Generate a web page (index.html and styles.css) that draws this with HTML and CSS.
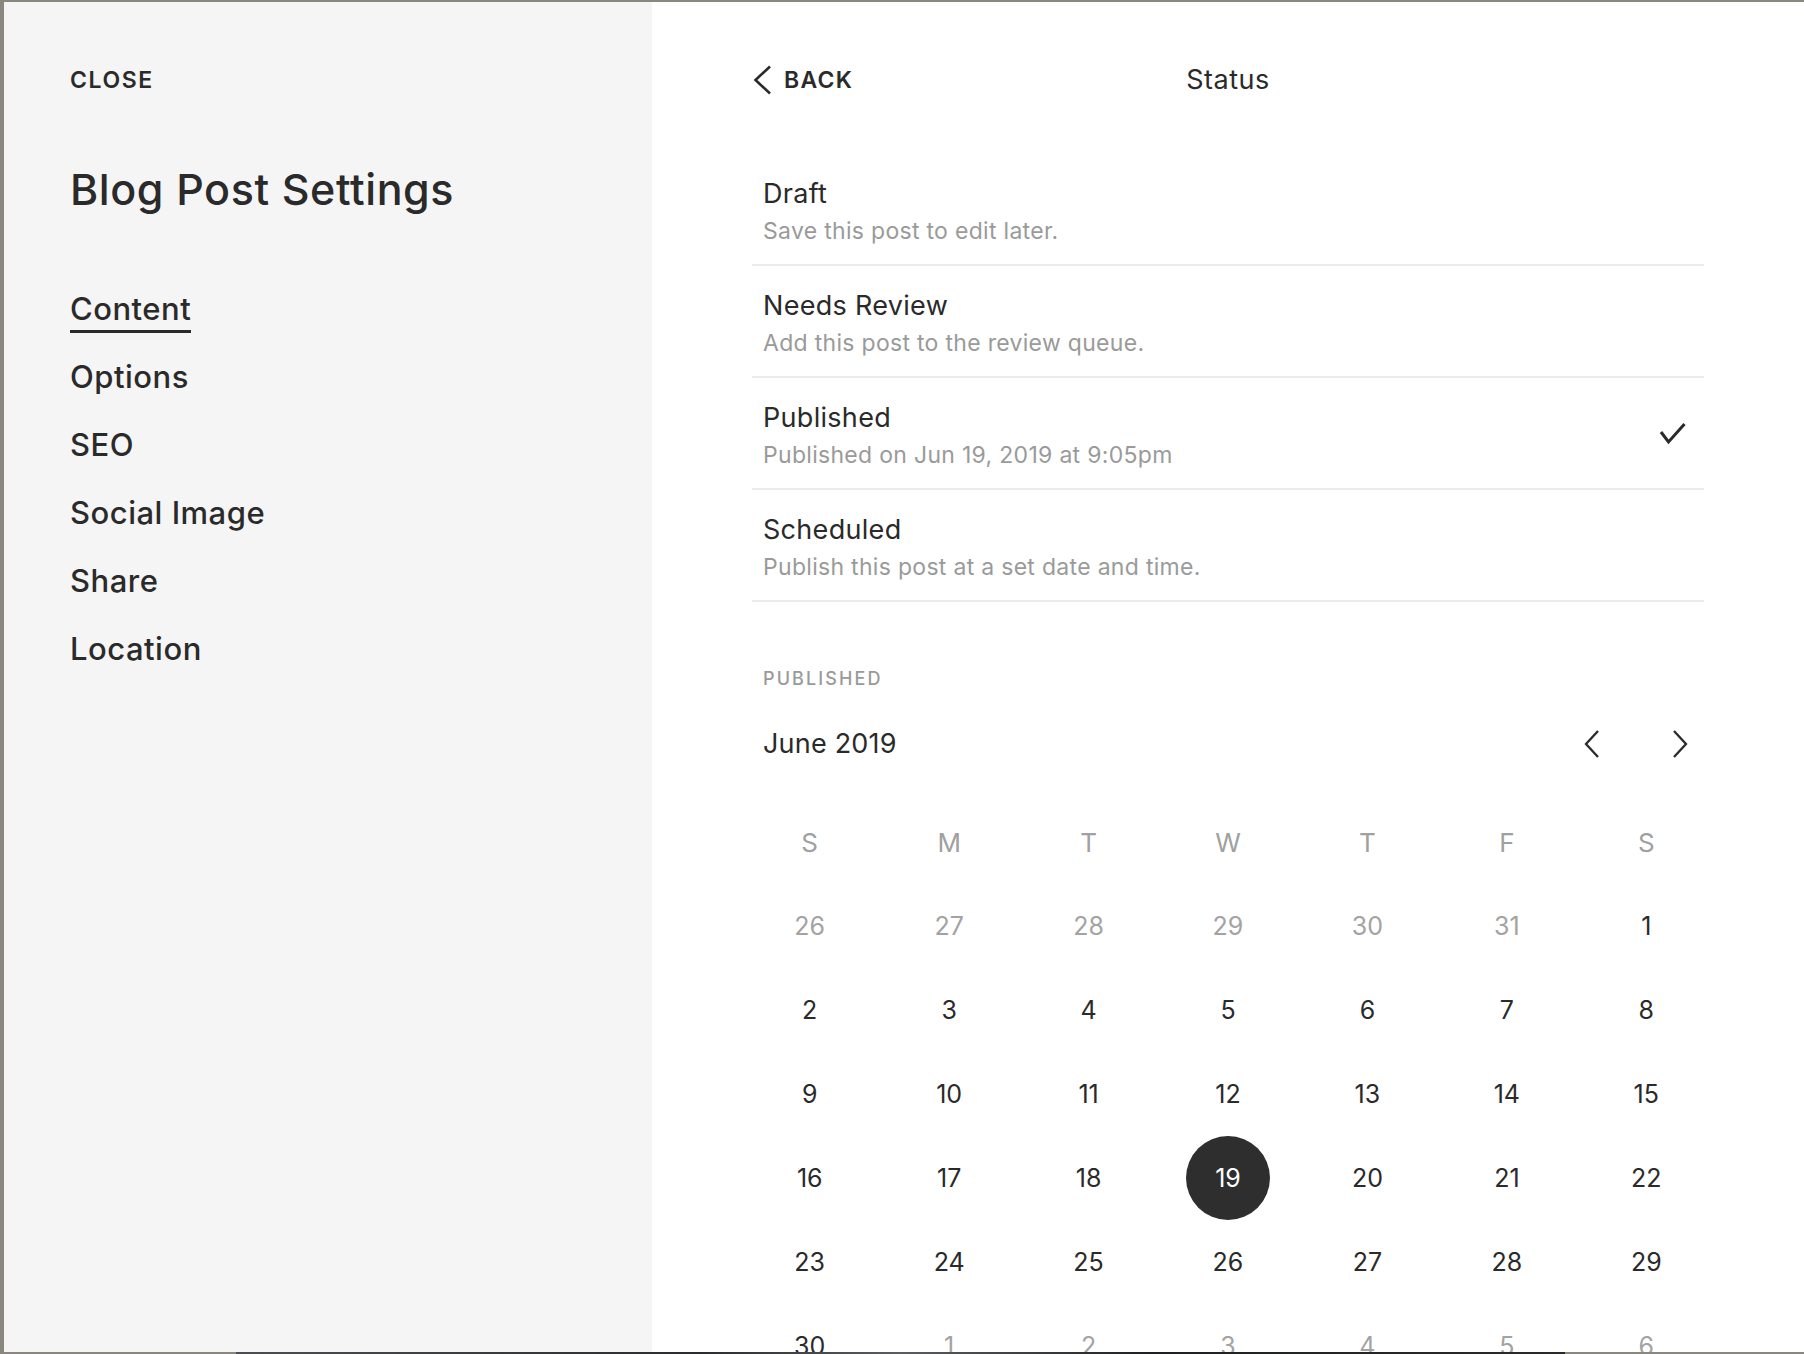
FILE: index.html
```html
<!DOCTYPE html>
<html lang="en">
<head>
<meta charset="utf-8">
<title>Blog Post Settings</title>
<link rel="stylesheet" href="styles.css">
</head>
<body>
<div class="window">
  <aside class="sidebar">
    <a class="close">CLOSE</a>
    <h1 class="title">Blog Post Settings</h1>
    <nav class="nav">
      <a class="nav-item active">Content</a>
      <a class="nav-item">Options</a>
      <a class="nav-item">SEO</a>
      <a class="nav-item">Social Image</a>
      <a class="nav-item">Share</a>
      <a class="nav-item">Location</a>
    </nav>
  </aside>
  <main class="panel">
    <header class="panel-head">
      <a class="back">
        <svg class="back-icon" viewBox="0 0 20 30" width="20" height="30"><path d="M18 1.5 L3.5 15 L18 28.5" fill="none" stroke="#2a2a2a" stroke-width="2.6"/></svg>
        <span>BACK</span>
      </a>
      <h2 class="panel-title">Status</h2>
      <span></span>
    </header>
    <ul class="status-list">
      <li class="status-item">
        <div>
          <div class="status-name">Draft</div>
          <div class="status-desc">Save this post to edit later.</div>
        </div>
      </li>
      <li class="status-item">
        <div>
          <div class="status-name">Needs Review</div>
          <div class="status-desc">Add this post to the review queue.</div>
        </div>
      </li>
      <li class="status-item">
        <div>
          <div class="status-name">Published</div>
          <div class="status-desc">Published on Jun 19, 2019 at 9:05pm</div>
        </div>
        <svg class="check" viewBox="0 0 28 24" width="28" height="24"><path d="M3 11 L10.5 21 L26.5 3" fill="none" stroke="#2a2a2a" stroke-width="3"/></svg>
      </li>
      <li class="status-item">
        <div>
          <div class="status-name">Scheduled</div>
          <div class="status-desc">Publish this post at a set date and time.</div>
        </div>
      </li>
    </ul>
    <section class="published">
      <div class="label">PUBLISHED</div>
      <div class="month-row">
        <span class="month">June 2019</span>
        <div class="month-nav">
          <button class="month-btn"><svg viewBox="0 0 20 28" width="20" height="28"><path d="M16 1 L4 14 L16 27" fill="none" stroke="#2a2a2a" stroke-width="2.3"/></svg></button>
          <button class="month-btn"><svg viewBox="0 0 20 28" width="20" height="28"><path d="M4 1 L16 14 L4 27" fill="none" stroke="#2a2a2a" stroke-width="2.3"/></svg></button>
        </div>
      </div>
      <div class="cal">
        <div class="dow">S</div><div class="dow">M</div><div class="dow">T</div><div class="dow">W</div><div class="dow">T</div><div class="dow">F</div><div class="dow">S</div>
        <div class="day muted">26</div><div class="day muted">27</div><div class="day muted">28</div><div class="day muted">29</div><div class="day muted">30</div><div class="day muted">31</div><div class="day">1</div>
        <div class="day">2</div><div class="day">3</div><div class="day">4</div><div class="day">5</div><div class="day">6</div><div class="day">7</div><div class="day">8</div>
        <div class="day">9</div><div class="day">10</div><div class="day">11</div><div class="day">12</div><div class="day">13</div><div class="day">14</div><div class="day">15</div>
        <div class="day">16</div><div class="day">17</div><div class="day">18</div><div class="day selected"><span>19</span></div><div class="day">20</div><div class="day">21</div><div class="day">22</div>
        <div class="day">23</div><div class="day">24</div><div class="day">25</div><div class="day">26</div><div class="day">27</div><div class="day">28</div><div class="day">29</div>
        <div class="day">30</div><div class="day muted">1</div><div class="day muted">2</div><div class="day muted">3</div><div class="day muted">4</div><div class="day muted">5</div><div class="day muted">6</div>
      </div>
    </section>
  </main>
</div>
<div class="taskbar"></div>
</body>
</html>
```

FILE: styles.css
```css
html, body {
  margin: 0;
  height: 1354px;
  overflow: hidden;
}

body {
  background: #8a877f;
  font-family: Inter, "Liberation Sans", sans-serif;
  color: #2a2a2a;
}

.window {
  display: flex;
  margin: 2px 0 0 4px;
  height: 1350px;
  overflow: hidden;
}

/* ---------- sidebar ---------- */
.sidebar {
  width: 648px;
  flex: none;
  box-sizing: border-box;
  background: #f5f5f5;
  padding: 64px 0 0 66px;
  display: flex;
  flex-direction: column;
  align-items: flex-start;
}

.close {
  font-size: 23px;
  line-height: 28px;
  font-weight: 600;
  letter-spacing: 1.6px;
}

.title {
  margin: 70px 0 0;
  font-size: 43px;
  line-height: 50px;
  font-weight: 500;
  letter-spacing: 0.6px;
}

.nav {
  margin-top: 74px;
  display: flex;
  flex-direction: column;
  align-items: flex-start;
  gap: 23px;
}

.nav-item {
  font-size: 31px;
  line-height: 42px;
  font-weight: 500;
  letter-spacing: 0.5px;
  border-bottom: 3px solid transparent;
}

.nav-item.active {
  border-bottom-color: #2a2a2a;
}

/* ---------- panel ---------- */
.panel {
  flex: 1;
  box-sizing: border-box;
  background: #fff;
  padding: 64px 100px 0;
}

.panel-head {
  display: grid;
  grid-template-columns: 1fr auto 1fr;
  height: 28px;
}

.back {
  display: flex;
  align-items: center;
  gap: 12px;
  height: 28px;
  font-size: 23px;
  line-height: 28px;
  font-weight: 600;
  letter-spacing: 1.3px;
}

.back-icon {
  flex: none;
}

.panel-title {
  margin: 0;
  font-size: 27px;
  line-height: 28px;
  font-weight: 400;
  letter-spacing: 0.5px;
}

.status-list {
  list-style: none;
  margin: 60px 0 0;
  padding: 0;
}

.status-item {
  display: flex;
  align-items: center;
  justify-content: space-between;
  padding: 24px 18px 18px 11px;
  border-bottom: 2px solid #ebebeb;
}

.status-name {
  font-size: 27px;
  line-height: 32px;
  letter-spacing: 0.3px;
}

.status-desc {
  margin-top: 6px;
  font-size: 23px;
  line-height: 30px;
  letter-spacing: 0.3px;
  color: #9a9a9a;
}

.check {
  margin-top: -6px;
  flex: none;
}

.published {
  margin-top: 65px;
}

.label {
  padding-left: 11px;
  font-size: 18px;
  line-height: 24px;
  font-weight: 500;
  letter-spacing: 2.1px;
  color: #9a9a9a;
}

.month-row {
  margin-top: 37px;
  height: 32px;
  padding-left: 11px;
  display: flex;
  align-items: center;
  justify-content: space-between;
}

.month {
  font-size: 27px;
  line-height: 32px;
  letter-spacing: 0.2px;
}

.month-nav {
  display: flex;
  gap: 40px;
}

.month-btn {
  width: 48px;
  height: 32px;
  padding: 0;
  border: 0;
  background: none;
  display: flex;
  align-items: center;
  justify-content: center;
}

.cal {
  margin: 40px -12px 0;
  display: grid;
  grid-template-columns: repeat(7, 1fr);
  grid-auto-rows: 84px;
}

.dow {
  display: flex;
  align-items: center;
  justify-content: center;
  font-size: 26px;
  color: #a0a0a0;
}

.day {
  display: flex;
  align-items: center;
  justify-content: center;
  font-size: 25px;
}

.day.muted {
  color: #a3a3a3;
}

.day.selected span {
  width: 84px;
  height: 84px;
  border-radius: 50%;
  background: #2e2e2e;
  color: #fff;
  display: flex;
  align-items: center;
  justify-content: center;
}

.taskbar {
  height: 2px;
  background: linear-gradient(to right,
    #8a877f 0, #8a877f 236px,
    #4b4f53 236px, #2a2c2e 700px,
    #5a5e62 900px, #1f2021 1150px,
    #2a2a2a 1565px, #8a877f 1565px, #8a877f 100%);
}
```
